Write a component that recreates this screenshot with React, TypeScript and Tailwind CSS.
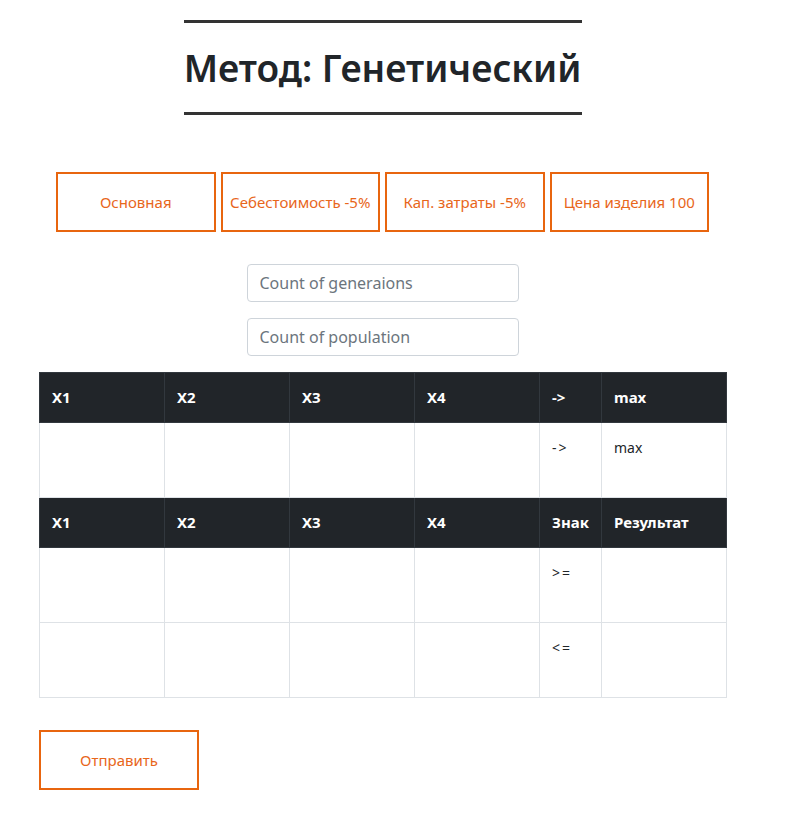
import type React from 'react'

const tabs = ['Основная', 'Себестоимость -5%', 'Кап. затраты -5%', 'Цена изделия 100']

const firstHead = ['X1', 'X2', 'X3', 'X4', '->', 'max']
const secondHead = ['X1', 'X2', 'X3', 'X4', 'Знак', 'Результат']
const signs = ['>=', '<=']

const colWidth = (i: number) => (i === 4 ? 'w-[62px]' : 'w-[125px]')

const HeadRow: React.FC<{ cells: string[] }> = ({ cells }) => (
  <tr className="h-[50px] bg-[#212529] text-white">
    {cells.map((c, i) => (
      <th key={i} className={`${colWidth(i)} border border-[#32383e] px-3 text-left align-middle text-[15px] font-bold`}>
        {c}
      </th>
    ))}
  </tr>
)

const BodyRow: React.FC<{ sign: string; result?: string }> = ({ sign, result = '' }) => (
  <tr className="h-[75px]">
    {[0, 1, 2, 3].map((i) => (
      <td key={i} className="border border-[#dee2e6] px-3 py-3 align-top" />
    ))}
    <td className="border border-[#dee2e6] px-3 pt-[14px] align-top text-[14px] tracking-[2px] text-[#212529]">{sign}</td>
    <td className="border border-[#dee2e6] px-3 pt-[14px] align-top text-[14px] text-[#212529]">{result}</td>
  </tr>
)

const App: React.FC = () => {
  return (
    <div className="min-h-screen bg-white" style={{ fontFamily: '"Noto Sans", "Open Sans", sans-serif' }}>
      <div className="flex w-[765px] flex-col items-center pt-5">
        <div className="w-[398px] border-y-[3px] border-[#333333] py-[18px]">
          <h1 className="text-center text-[37px] leading-[53px] font-semibold text-[#212529]">Метод: Генетический</h1>
        </div>

        <div className="mt-[57px] flex gap-[5px]">
          {tabs.map((t) => (
            <button
              key={t}
              className="flex h-[60px] w-[159.5px] items-center justify-center border-2 border-[#e8650f] bg-white text-[15px] text-[#e8661b]"
            >
              {t}
            </button>
          ))}
        </div>

        <div className="mt-8 flex flex-col gap-4">
          <input
            className="h-[38px] w-[272px] rounded border border-[#ced4da] px-3 text-[16px] text-[#495057] placeholder:text-[#6c757d]"
            placeholder="Count of generaions"
          />
          <input
            className="h-[38px] w-[272px] rounded border border-[#ced4da] px-3 text-[16px] text-[#495057] placeholder:text-[#6c757d]"
            placeholder="Count of population"
          />
        </div>

        <div className="mt-4 w-[687px]">
          <table className="w-[687px] table-fixed border-collapse">
            <tbody>
              <HeadRow cells={firstHead} />
              <BodyRow sign="->" result="max" />
              <HeadRow cells={secondHead} />
              {signs.map((s) => (
                <BodyRow key={s} sign={s} />
              ))}
            </tbody>
          </table>

          <button className="mt-[32px] flex h-[60px] w-[160px] items-center justify-center border-2 border-[#e8650f] bg-white text-[15px] text-[#e8661b]">
            Отправить
          </button>
        </div>
      </div>
    </div>
  )
}

export default App
